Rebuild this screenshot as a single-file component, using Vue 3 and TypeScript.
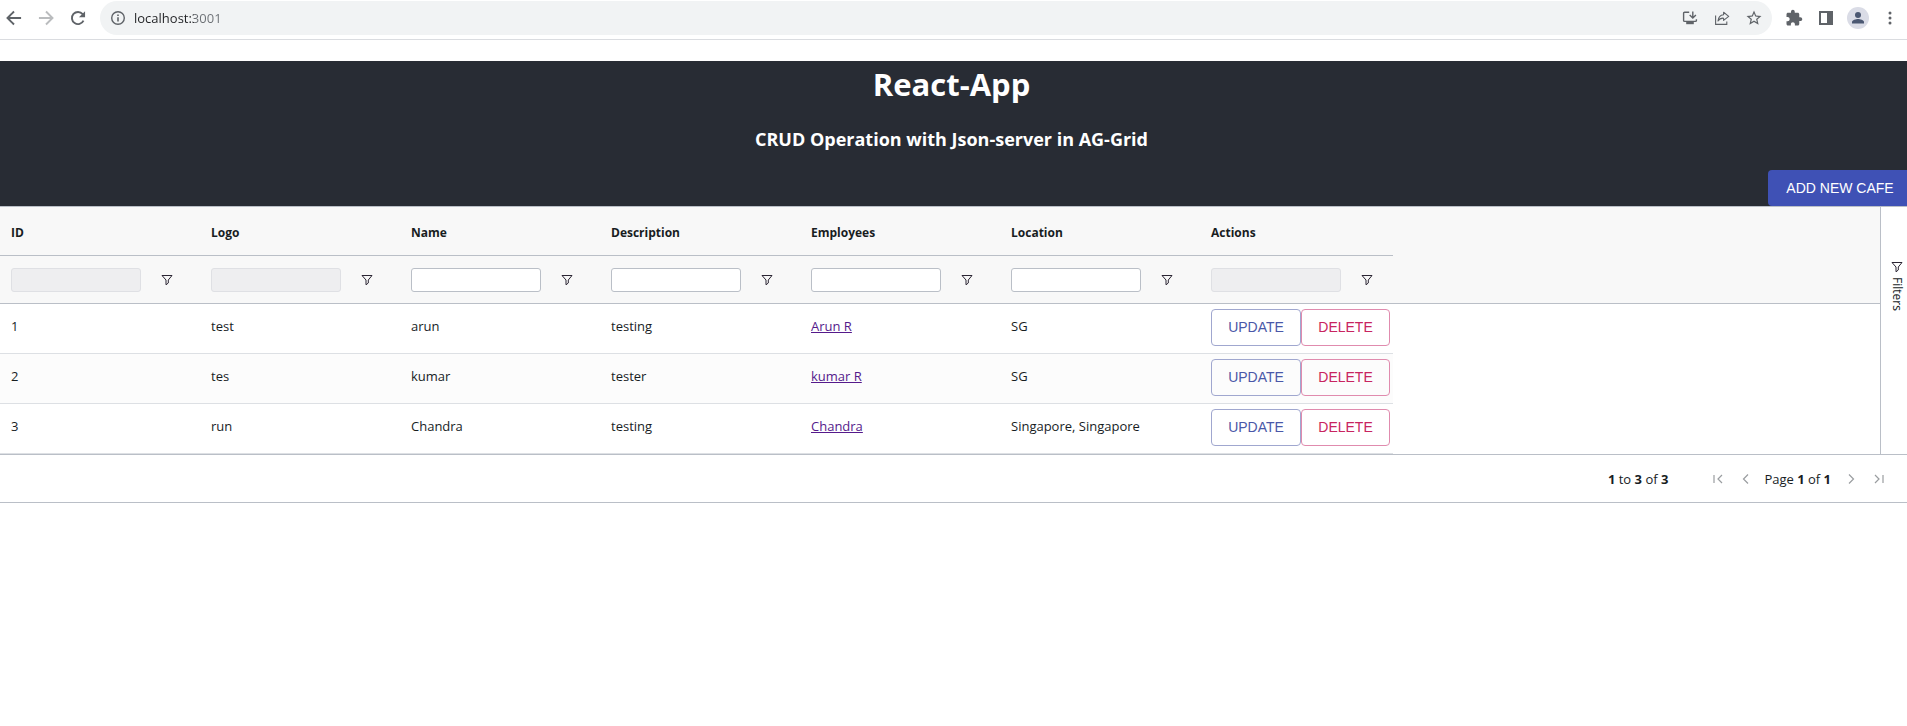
<script setup lang="ts">
import { ref } from 'vue'

interface Column {
  key: string
  label: string
  filterable: boolean
}

interface Cafe {
  id: number
  logo: string
  name: string
  description: string
  employees: string
  location: string
}

const columns: Column[] = [
  { key: 'id', label: 'ID', filterable: false },
  { key: 'logo', label: 'Logo', filterable: false },
  { key: 'name', label: 'Name', filterable: true },
  { key: 'description', label: 'Description', filterable: true },
  { key: 'employees', label: 'Employees', filterable: true },
  { key: 'location', label: 'Location', filterable: true },
  { key: 'actions', label: 'Actions', filterable: false },
]

const cafes: Cafe[] = [
  { id: 1, logo: 'test', name: 'arun', description: 'testing', employees: 'Arun R', location: 'SG' },
  { id: 2, logo: 'tes', name: 'kumar', description: 'tester', employees: 'kumar R', location: 'SG' },
  { id: 3, logo: 'run', name: 'Chandra', description: 'testing', employees: 'Chandra', location: 'Singapore, Singapore' },
]

const address = ref('localhost:3001')
const filters = ref<Record<string, string>>({})
</script>

<template>
  <div class="page">
    <nav class="toolbar" aria-label="Browser">
      <button class="tool" type="button" aria-label="Back">
        <svg width="20" height="20" viewBox="0 0 24 24"><path d="M20.5 12H5M12 4.2 4.2 12l7.8 7.8" fill="none" stroke="#5f6368" stroke-width="2.3" /></svg>
      </button>
      <button class="tool" type="button" aria-label="Forward">
        <svg width="20" height="20" viewBox="0 0 24 24"><path d="M3.5 12H19M12 4.2l7.8 7.8-7.8 7.8" fill="none" stroke="#babcbe" stroke-width="2.3" /></svg>
      </button>
      <button class="tool" type="button" aria-label="Reload">
        <svg width="20" height="20" viewBox="0 0 24 24"><path d="M18.6 15.2A7.3 7.3 0 1 1 17.6 7.3" fill="none" stroke="#5f6368" stroke-width="2.3" /><path d="M20.5 3.8v7.4h-7.4z" fill="#5f6368" /></svg>
      </button>
      <div class="omnibox">
        <button class="tool" type="button" aria-label="Site information">
          <svg width="16" height="16" viewBox="0 0 16 16"><circle cx="8" cy="8" r="6.3" fill="none" stroke="#5f6368" stroke-width="1.4" /><path d="M7.2 7.2h1.6v4.2H7.2zM7.2 4.5h1.6v1.6H7.2z" fill="#5f6368" /></svg>
        </button>
        <input v-model="address" class="address" type="text" aria-label="Address" spellcheck="false" />
        <button class="tool" type="button" aria-label="Install app">
          <svg width="16" height="16" viewBox="0 0 16 16" fill="none" stroke="#5f6368" stroke-width="1.4"><path d="M7.2 2.2H2.6q-1 0-1 1v7.2q0 1 1 1h10.8q1 0 1-1V9.2" /><path d="M10.8 1.6v6M7.7 5l3.1 3.1L13.9 5" /><path d="M4.2 11.4h7.6v2.8H4.2z" fill="#5f6368" stroke="none" /></svg>
        </button>
        <button class="tool" type="button" aria-label="Share">
          <svg width="16" height="16" viewBox="0 0 16 16" fill="none" stroke="#5f6368" stroke-width="1.1"><path d="M1.6 5.4v9h11.2v-3" /><path d="M9.6 2.3 14.7 6.4 9.6 10.4V8.2C7 8 5.2 9 4 11c.3-3.6 2.3-6 5.6-6.3z" stroke-linejoin="round" /></svg>
        </button>
        <button class="tool" type="button" aria-label="Bookmark this page">
          <svg width="18" height="18" viewBox="0 0 24 24" fill="#5f6368"><path d="M22 9.24l-7.19-.62L12 2 9.19 8.63 2 9.24l5.46 4.73L5.82 21 12 17.27 18.18 21l-1.63-7.03L22 9.24zM12 15.4l-3.76 2.27 1-4.28-3.32-2.88 4.38-.38L12 6.1l1.71 4.04 4.38.38-3.32 2.88 1 4.28L12 15.4z" /></svg>
        </button>
      </div>
      <div class="tools">
        <button class="tool" type="button" aria-label="Extensions">
          <svg width="18" height="18" viewBox="0 0 24 24" fill="#5f6368"><path d="M20.5 11H19V7c0-1.1-.9-2-2-2h-4V3.5C13 2.12 11.88 1 10.5 1S8 2.12 8 3.5V5H4c-1.1 0-1.99.9-1.99 2v3.8H3.5c1.49 0 2.7 1.21 2.7 2.7s-1.21 2.7-2.7 2.7H2V20c0 1.1.9 2 2 2h3.8v-1.5c0-1.49 1.21-2.7 2.7-2.7s2.7 1.21 2.7 2.7V22H17c1.1 0 2-.9 2-2v-4h1.5c1.38 0 2.5-1.12 2.5-2.5S21.88 11 20.5 11z" /></svg>
        </button>
        <button class="tool" type="button" aria-label="Side panel">
          <svg width="16" height="16" viewBox="0 0 16 16"><path d="M1 1h14v14H1zM3 3v10h6V3z" fill="#5f6368" fill-rule="evenodd" /></svg>
        </button>
        <button class="tool" type="button" aria-label="Profile">
          <svg width="22" height="22" viewBox="0 0 22 22"><circle cx="11" cy="11" r="11" fill="#dadce6" /><circle cx="11" cy="8" r="3" fill="#4b5872" /><path d="M5 16.5v-1.5c0-2 4-3 6-3s6 1 6 3v1.5z" fill="#4b5872" /></svg>
        </button>
        <button class="tool" type="button" aria-label="Menu">
          <svg width="16" height="16" viewBox="0 0 16 16" fill="#5f6368"><circle cx="8" cy="3" r="1.5" /><circle cx="8" cy="8" r="1.5" /><circle cx="8" cy="13" r="1.5" /></svg>
        </button>
      </div>
    </nav>

    <header class="banner">
      <h1>React-App</h1>
      <h3>CRUD Operation with Json-server in AG-Grid</h3>
      <button class="add" type="button">ADD NEW CAFE</button>
    </header>

    <main class="grid">
      <div class="grid-body">
        <table>
          <colgroup>
            <col v-for="col in columns" :key="col.key" :class="col.key === 'actions' ? 'col-actions' : 'col-data'" />
            <col />
          </colgroup>
          <thead>
            <tr class="labels">
              <th v-for="col in columns" :key="col.key" scope="col">{{ col.label }}</th>
              <td class="filler"></td>
            </tr>
            <tr class="filters">
              <td v-for="col in columns" :key="col.key">
                <div class="filter">
                  <input
                    v-model="filters[col.key]"
                    type="text"
                    :aria-label="col.label + ' filter'"
                    :disabled="!col.filterable"
                  />
                  <button type="button" :aria-label="'Open ' + col.label + ' filter menu'">
                    <svg width="12" height="12" viewBox="0 0 12 12"><path d="M1 1.500h10L7.300 6v3L5 10.800V6z" fill="none" stroke="#2b2533" stroke-width="1" /></svg>
                  </button>
                </div>
              </td>
              <td class="filler"></td>
            </tr>
          </thead>
          <tbody>
            <tr v-for="cafe in cafes" :key="cafe.id">
              <td>{{ cafe.id }}</td>
              <td>{{ cafe.logo }}</td>
              <td>{{ cafe.name }}</td>
              <td>{{ cafe.description }}</td>
              <td><a href="#">{{ cafe.employees }}</a></td>
              <td>{{ cafe.location }}</td>
              <td class="actions-cell">
                <div class="actions">
                  <button class="update" type="button">UPDATE</button>
                  <button class="delete" type="button">DELETE</button>
                </div>
              </td>
              <td class="filler"></td>
            </tr>
          </tbody>
        </table>
        <aside class="sidebar">
          <button type="button">
            <svg width="12" height="12" viewBox="0 0 12 12"><path d="M1 1.500h10L7.300 6v3L5 10.800V6z" fill="none" stroke="#2b2533" stroke-width="1" /></svg>
            <span>Filters</span>
          </button>
        </aside>
      </div>

      <footer class="paging">
        <span class="summary"><b>1</b> to <b>3</b> of <b>3</b></span>
        <div class="pager">
          <button type="button" aria-label="First page" disabled>
            <svg width="12" height="12" viewBox="0 0 12 12"><path d="M2 2v8M10 2 6 6l4 4" /></svg>
          </button>
          <button type="button" aria-label="Previous page" disabled>
            <svg width="12" height="12" viewBox="0 0 12 12"><path d="M8 1.500 3.500 6 8 10.500" /></svg>
          </button>
          <span class="current">Page <b>1</b> of <b>1</b></span>
          <button type="button" aria-label="Next page" disabled>
            <svg width="12" height="12" viewBox="0 0 12 12"><path d="M4 1.500 8.500 6 4 10.500" /></svg>
          </button>
          <button type="button" aria-label="Last page" disabled>
            <svg width="12" height="12" viewBox="0 0 12 12"><path d="M2 2l4 4-4 4M10 2v8" /></svg>
          </button>
        </div>
      </footer>
    </main>
  </div>
</template>

<style>
body {
  margin: 0;
  background: #fff;
}
</style>

<style scoped>
.page {
  font-family: "Segoe UI", "Open Sans", "Noto Sans", sans-serif;
  font-size: 13px;
  color: #181d1f;
}

button {
  margin: 0;
  padding: 0;
  border: 0;
  background: none;
  font: inherit;
  color: inherit;
  cursor: pointer;
}

svg {
  display: block;
}

.toolbar {
  display: flex;
  align-items: center;
  gap: 4px;
  padding: 1px 3px 4px 0;
  border-bottom: 1px solid #dadce0;
}

.tool {
  display: flex;
  flex: none;
  align-items: center;
  justify-content: center;
  width: 28px;
  height: 28px;
}

.omnibox {
  display: flex;
  flex: 1;
  align-items: center;
  gap: 4px;
  height: 34px;
  margin: 0 4px;
  padding: 0 4px;
  border-radius: 17px;
  background: #f1f3f4;
}

/* The host is dark and the port is grey. */
.address {
  flex: 1;
  min-width: 0;
  margin-left: -2px;
  padding: 0;
  border: 0;
  outline: 0;
  font: inherit;
  line-height: 20px;
  color: transparent;
  caret-color: #202124;
  background: linear-gradient(to right, #202124 60px, #6b6f74 60px);
  background-clip: text;
  -webkit-background-clip: text;
}

.tools {
  display: flex;
  gap: 4px;
}

.banner {
  display: flex;
  flex-direction: column;
  align-items: center;
  margin-top: 21px;
  background: #282c34;
  color: #fff;
}

.banner h1 {
  margin: 0;
  padding: 2px 4px 0 0;
  font-size: 31px;
  line-height: 43px;
}

.banner h3 {
  margin: 21px 0 18px;
  padding-right: 4px;
  font-size: 18px;
  line-height: 25px;
}

.add {
  align-self: flex-end;
  min-width: 139px;
  height: 36px;
  padding: 0 11px 0 16px;
  border-radius: 4px 0 0 4px;
  background: #3f51b5;
  font-family: "Liberation Sans", Arial, sans-serif;
  font-size: 14px;
}

.grid {
  border-top: 1px solid #babfc7;
  border-bottom: 1px solid #babfc7;
}

.grid-body {
  display: flex;
  border-bottom: 1px solid #babfc7;
}

table {
  flex: 1;
  min-width: 0;
  border-collapse: separate;
  border-spacing: 0;
  table-layout: fixed;
}

.col-data {
  width: 200px;
}

.col-actions {
  width: 193px;
}

th,
td {
  box-sizing: border-box;
  padding: 0 0 0 11px;
  text-align: left;
}

thead {
  background: #f8f8f8;
}

.labels th {
  height: 49px;
  padding-top: 2px;
  border-bottom: 1px solid #babfc7;
  font-size: 12px;
  font-weight: 700;
}

.filters td {
  height: 48px;
  border-bottom: 1px solid #babfc7;
}

.filter {
  display: flex;
  align-items: center;
  gap: 20px;
}

.filter input {
  box-sizing: border-box;
  width: 130px;
  height: 24px;
  padding: 0 6px;
  border: 1px solid #babfc7;
  border-radius: 3px;
  background: #fff;
  font: inherit;
}

.filter input:disabled {
  border-color: #dfe0e4;
  background: #eeeef0;
}

tbody td {
  height: 50px;
  padding-bottom: 6px;
  border-bottom: 1px solid #dde0e4;
}

tbody tr:nth-child(even) td {
  background: #fcfcfc;
}

tbody tr .filler {
  border-bottom: 0;
}

tbody tr:nth-child(even) .filler {
  background: #fff;
}

tbody a {
  color: #551a8b;
}

tbody .actions-cell {
  padding-bottom: 3px;
}

.actions {
  display: flex;
}

.actions button {
  box-sizing: border-box;
  height: 37px;
  padding: 0 15px;
  border: 1px solid;
  border-radius: 4px;
  font-family: "Liberation Sans", Arial, sans-serif;
  font-size: 14px;
}

.actions .update {
  width: 90px;
  border-color: #a0a7cf;
  color: #4a58a8;
}

.actions .delete {
  width: 89px;
  border-color: #e08bae;
  color: #c8245f;
}

.sidebar {
  width: 26px;
  border-left: 1px solid #babfc7;
}

.sidebar button {
  display: flex;
  flex-direction: column;
  align-items: center;
  gap: 4px;
  width: 100%;
  padding: 54px 0 0 5px;
}

.sidebar span {
  writing-mode: vertical-rl;
  font-size: 12px;
  line-height: 16px;
}

.paging {
  display: flex;
  align-items: center;
  justify-content: flex-end;
  gap: 44px;
  height: 47px;
  padding-right: 22px;
}

.pager {
  display: flex;
  align-items: center;
  gap: 16px;
}

.current {
  margin: 0 -2px 0 -4px;
}

.pager path {
  fill: none;
  stroke: #9a9da0;
  stroke-width: 1.2;
}
</style>
